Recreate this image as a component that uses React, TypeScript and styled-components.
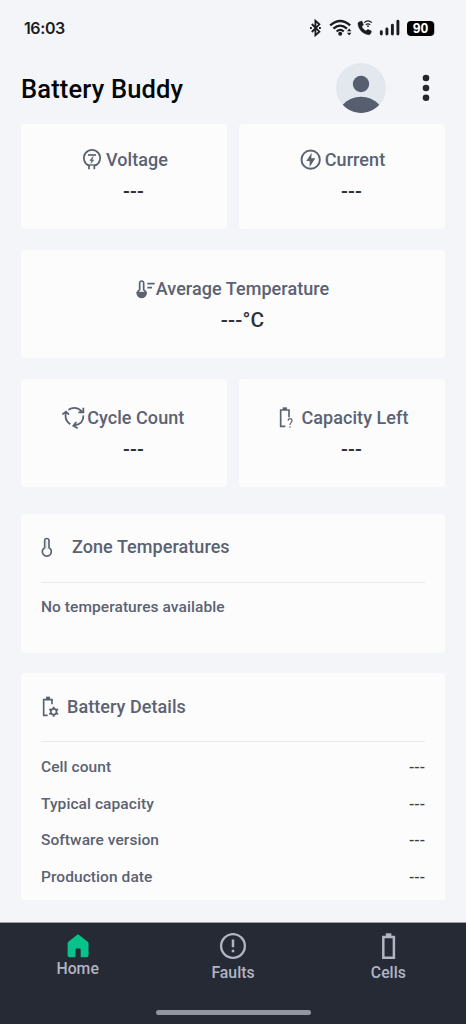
import React from "react";
import styled, { createGlobalStyle } from "styled-components";

const GlobalStyle = createGlobalStyle`
  * { box-sizing: border-box; }
  body { margin: 0; background: #f3f5f9; font-family: Roboto, sans-serif; font-weight: 500; }
  svg { display: block; flex: none; }
`;

const Screen = styled.div`
  width: 466px;
  height: 1024px;
  display: flex;
  flex-direction: column;
  background: #f3f5f9;
  color: #5b6272;
  overflow: hidden;
`;

const StatusBar = styled.div`
  height: 56px;
  flex: none;
  display: flex;
  justify-content: space-between;
  padding: 0 32px 0 24px;
  color: #1b1c20;
`;

const Clock = styled.span`
  font: 600 16px/56px Inter, sans-serif;
  letter-spacing: -0.4px;
`;

const StatusIcons = styled.div`
  display: flex;
  align-items: center;
`;

const BatteryLevel = styled.span`
  width: 27px;
  height: 15px;
  margin-left: 6px;
  border-radius: 4px;
  background: #000;
  box-shadow: 1.5px 0 0 -0.5px #b9bbc0;
  color: #fff;
  font: 700 14px/15.5px "Liberation Sans", sans-serif;
  text-align: center;
`;

const Header = styled.header`
  height: 68px;
  flex: none;
  display: flex;
  align-items: center;
  padding: 0 36px 4px 21px;
`;

const Title = styled.h1`
  flex: 1;
  margin: 0;
  font-size: 25.5px;
  line-height: 32px;
  padding-top: 1px;
  font-weight: 500;
  letter-spacing: 0.17px;
  color: #050608;
`;

const Content = styled.main`
  height: 798px;
  flex: none;
  padding: 0 21px;
`;

const CardRow = styled.div<{ $gap: number }>`
  display: flex;
  gap: 12px;
  margin-bottom: ${(p) => p.$gap}px;
`;

const MetricCard = styled.section<{ $height: number }>`
  flex: 1;
  height: ${(p) => p.$height}px;
  padding-top: ${(p) => (p.$height > 105 ? 26 : 23)}px;
  border-radius: 4px;
  background: #fcfcfd;
`;

const MetricHead = styled.div<{ $gap: number; $shift: number }>`
  display: flex;
  justify-content: center;
  align-items: center;
  gap: ${(p) => p.$gap}px;
  height: 25px;
  padding-right: ${(p) => p.$shift}px;
`;

const Label = styled.span`
  font-size: 18px;
  line-height: 25px;
  letter-spacing: 0.06px;
  white-space: nowrap;
`;

const Value = styled.div<{ $size: number }>`
  padding-left: 19px;
  margin-top: 6px;
  text-align: center;
  font-size: ${(p) => p.$size}px;
  line-height: 26px;
  letter-spacing: 0.2px;
  color: #303138;
`;

const ListCard = styled.section<{ $height: number; $square?: boolean }>`
  height: ${(p) => p.$height}px;
  margin-bottom: 20px;
  padding: 0 20px;
  border-radius: ${(p) => (p.$square ? "4px 4px 0 0" : "4px")};
  background: #fcfcfd;
`;

const ListHead = styled.div<{ $gap: number }>`
  display: flex;
  align-items: center;
  gap: ${(p) => p.$gap}px;
  height: 69px;
  padding-bottom: 1.5px;
  border-bottom: 1.5px solid #e7e9ee;
`;

const ListRow = styled.div`
  display: flex;
  justify-content: space-between;
  height: 36.5px;
  font-size: 15.5px;
  line-height: 36.5px;
  letter-spacing: 0.07px;
`;

const Rows = styled.div<{ $top: number }>`
  padding-top: ${(p) => p.$top}px;
`;

const RowValue = styled.span`
  color: #3c3e47;
`;

const NavBar = styled.nav`
  height: 102px;
  flex: none;
  display: flex;
  flex-direction: column;
  align-items: center;
  background: #262a35;
  border-top: 1px solid #9b9da2;
`;

const Tabs = styled.div`
  width: 100%;
  height: 86.5px;
  display: flex;
`;

const Tab = styled.div<{ $gap: number }>`
  flex: 1;
  display: flex;
  flex-direction: column;
  align-items: center;
  gap: ${(p) => p.$gap}px;
  padding-top: 10px;
  font-size: 15.8px;
  line-height: 20px;
  color: #b0b5c3;
`;

const HomeIndicator = styled.div`
  width: 155px;
  height: 5px;
  border-radius: 3px;
  background: #9296a0;
`;

type StrokeProps = { w: number; h: number; box: string; width?: number; children: React.ReactNode };
const Stroke = ({ w, h, box, width = 5, children }: StrokeProps) => (
  <svg width={w} height={h} viewBox={box} fill="none" stroke="currentColor" strokeWidth={width}>
    {children}
  </svg>
);

const StatusGlyphs = () => (
  <svg width="91" height="20" viewBox="0 0 91 20" fill="none" stroke="currentColor">
    <path d="M1.8 6l7.6 7.6-4 3.6V2.8l4 3.6L1.8 14" strokeWidth="1.8" />
    <path d="M0 10h1.8M9 10H10.8" strokeWidth="1.9" />
    <path d="M20.2 7.4Q30.2 -1.4 40.2 7.4" strokeWidth="2.3" />
    <path d="M23.4 10.6Q30.2 4.6 37 10.6M26.6 13.5Q30.2 10.3 33.8 13.5" strokeWidth="2.2" />
    <circle cx="30.2" cy="15.7" r="2" fill="currentColor" stroke="none" />
    <path d="M37 13.2l2.2-2.6 2.2 2.6zM37 14.8h4.4l-2.2 2.6z" fill="currentColor" stroke="none" />
    <path
      d="M49 4.1l2-.9c.6-.2 1 0 1.2.5l1.1 2.8c.1.5 0 .8-.4 1.1l-1.2 1c.8 2 2.3 3.5 4.3 4.4l1.2-1.2c.3-.4.7-.4 1.1-.2l2.6 1.2c.5.3.6.7.4 1.2l-.8 1.7c-.3.7-.9 1-1.7 1C53 16.3 48.5 11.3 48 6c-.1-.9.2-1.5 1-1.9z"
      fill="currentColor"
      stroke="currentColor"
      strokeWidth=".5"
    />
    <path d="M54.1 4.6Q58 1.2 61.9 4.6M55.8 6.7Q58 4.9 60.2 6.7" strokeWidth="1.2" />
    <circle cx="58" cy="8.2" r=".9" fill="currentColor" stroke="none" />
    <path d="M71.3 13.6V16M76.9 11V16M82.4 7.2V16M87.9 3.3V16" strokeWidth="2.9" strokeLinecap="round" />
  </svg>
);

const Avatar = () => (
  <svg width="50" height="50" viewBox="0 0 50 50">
    <circle cx="25" cy="25" r="25" fill="#e3e8ef" />
    <circle cx="25" cy="21" r="8.2" fill="#575e70" />
    <path d="M6.8 41.8C16 31 34 31 43.2 41.8C33.5 52.6 16.5 52.6 6.8 41.8z" fill="#575e70" />
  </svg>
);

const MenuDots = styled.svg`
  margin-left: 36.5px;
  fill: #24262c;
`;

const VoltageIcon = () => (
  <Stroke w={24} h={24} box="0 0 72 72" width={5.2}>
    <path d="M27 53A24.5 24.5 0 1 1 45 53" />
    <path d="M22 51H50" strokeWidth="4" />
    <path d="M27 51V64M43 51V64" />
    <path d="M24 21H48" strokeWidth="5" />
    <path d="M39 25L28 38H34L31 49L43 35H37L41 25z" fill="currentColor" stroke="none" />
  </Stroke>
);

const CurrentIcon = () => (
  <Stroke w={24} h={24} box="0 0 72 72" width={5.8}>
    <circle cx="35" cy="35" r="27.5" />
    <path d="M38 14L22 39H32V57L49 31H37z" fill="currentColor" stroke="none" />
  </Stroke>
);

const AverageIcon = () => (
  <Stroke w={20} h={24} box="0 0 60 72" width={5.2}>
    <path d="M11 38V18a6 6 0 0 1 12 0V38a12.5 12.5 0 1 1-12 0z" />
    <path d="M4 47H30A13 13 0 0 1 4 47z" fill="currentColor" />
    <path d="M34 20H56M34 32H48" />
  </Stroke>
);

const CycleIcon = () => (
  <Stroke w={24} h={24} box="0 0 72 72" width={5.4}>
    <path d="M19 11Q42-2 60 17M64 5V19H49" />
    <path d="M12 18Q6 42 25 55M1 25L12 17L21 26" />
    <path d="M64 28Q66 53 36 59M43 48L34 59L47 67" />
  </Stroke>
);

const CapacityIcon = () => (
  <Stroke w={24} h={24} box="0 0 72 72" width={5}>
    <path d="M31 61H17V12H42V34" />
    <path d="M23 4H36V12H23z" fill="currentColor" stroke="none" />
    <path d="M39 44Q40 38 45 38Q51 38 51 44Q51 47 48 50Q45 52 45 57M45 61V65" strokeWidth="3.5" />
  </Stroke>
);

const ZoneIcon = () => (
  <Stroke w={12} h={20} box="0 0 36 60" width={5}>
    <path d="M11 32V11a6.5 6.5 0 0 1 13 0V32a13.5 13.5 0 1 1-13 0z" />
    <path d="M17.5 12V39" strokeWidth="2" opacity=".35" />
  </Stroke>
);

const DetailsIcon = () => (
  <Stroke w={18} h={22} box="0 0 54 66" width={5}>
    <path d="M20 61H8V14H33V28" />
    <path d="M15 5H27V13H15z" fill="currentColor" stroke="none" />
    <circle cx="38" cy="50" r="8.5" strokeWidth="5" />
    <path d="M38 35V42M38 58V65M25 42.5L31 46M45 54L51 57.5M25 57.5L31 54M45 46L51 42.5" strokeWidth="6" />
  </Stroke>
);

const HomeIcon = () => (
  <svg width="22" height="25" viewBox="0 0 22 25" fill="#07c28a">
    <path d="M9.6 2.2a2.2 2.2 0 0 1 2.8 0L20.7 8.8a2 2 0 0 1 .8 1.6V22.3a2 2 0 0 1-2 2H13.7V16.8a1.2 1.2 0 0 0-1.2-1.2H9.7a1.2 1.2 0 0 0-1.2 1.2V24.3H2.6a2 2 0 0 1-2-2V10.4a2 2 0 0 1 .8-1.6z" />
  </svg>
);

const FaultsIcon = () => (
  <Stroke w={28} h={28} box="0 0 28 28" width={2.3}>
    <circle cx="14" cy="13" r="11.9" />
    <path d="M14 6.500V14.300M14 16.800V19.300" strokeWidth="2.5" />
  </Stroke>
);

const CellsIcon = () => (
  <Stroke w={28} h={28} box="0 0 28 28" width={2.5}>
    <path d="M9.3 4H19.9V24.700H9.300z" />
    <path d="M11.8 .3H17.4V4H11.800z" fill="currentColor" stroke="none" />
  </Stroke>
);

type MetricProps = {
  icon: React.ReactNode;
  label: string;
  value: string;
  height: number;
  gap?: number;
  shift?: number;
  size?: number;
};
const Metric = ({ icon, label, value, height, gap = 2, shift = 0, size = 20 }: MetricProps) => (
  <MetricCard $height={height}>
    <MetricHead $gap={gap} $shift={shift}>
      {icon}
      <Label>{label}</Label>
    </MetricHead>
    <Value $size={size}>{value}</Value>
  </MetricCard>
);

const details = ["Cell count", "Typical capacity", "Software version", "Production date"];

export default function App() {
  return (
    <Screen>
      <GlobalStyle />
      <StatusBar>
        <Clock>16:03</Clock>
        <StatusIcons>
          <StatusGlyphs />
          <BatteryLevel>90</BatteryLevel>
        </StatusIcons>
      </StatusBar>
      <Header>
        <Title>Battery Buddy</Title>
        <Avatar />
        <MenuDots width="8" height="28" viewBox="0 0 8 28">
          <circle cx="4" cy="4" r="3.3" />
          <circle cx="4" cy="14" r="3.3" />
          <circle cx="4" cy="23.7" r="3.3" />
        </MenuDots>
      </Header>
      <Content>
        <CardRow $gap={21}>
          <Metric icon={<VoltageIcon />} label="Voltage" value="---" height={105} />
          <Metric icon={<CurrentIcon />} label="Current" value="---" height={105} />
        </CardRow>
        <CardRow $gap={21}>
          <Metric icon={<AverageIcon />} label="Average Temperature" value="---°C" height={108} gap={0} shift={1} size={20.8} />
        </CardRow>
        <CardRow $gap={26.5}>
          <Metric icon={<CycleIcon />} label="Cycle Count" value="---" height={108} gap={1.5} shift={2} />
          <Metric icon={<CapacityIcon />} label="Capacity Left" value="---" height={108} />
        </CardRow>
        <ListCard $height={139.5}>
          <ListHead $gap={19}>
            <ZoneIcon />
            <Label>Zone Temperatures</Label>
          </ListHead>
          <Rows $top={6.6}>
            <ListRow>No temperatures available</ListRow>
          </Rows>
        </ListCard>
        <ListCard $height={227} $square>
          <ListHead $gap={8}>
            <DetailsIcon />
            <Label>Battery Details</Label>
          </ListHead>
          <Rows $top={7.1}>
            {details.map((name) => (
              <ListRow key={name}>
                <span>{name}</span>
                <RowValue>---</RowValue>
              </ListRow>
            ))}
          </Rows>
        </ListCard>
      </Content>
      <NavBar>
        <Tabs>
          <Tab $gap={1}>
            <HomeIcon />
            <span>Home</span>
          </Tab>
          <Tab $gap={2}>
            <FaultsIcon />
            <span>Faults</span>
          </Tab>
          <Tab $gap={2}>
            <CellsIcon />
            <span>Cells</span>
          </Tab>
        </Tabs>
        <HomeIndicator />
      </NavBar>
    </Screen>
  );
}
